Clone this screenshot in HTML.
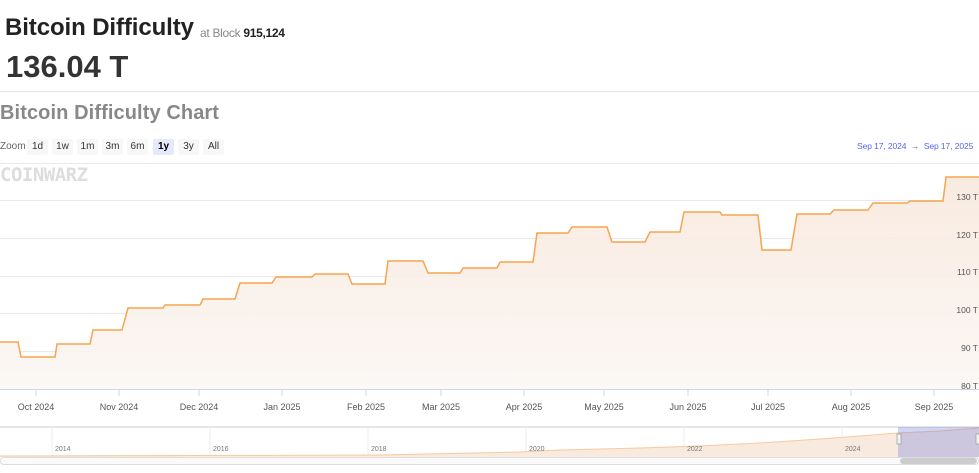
<!DOCTYPE html>
<html><head><style>
body{margin:0;width:979px;height:473px;background:#fff;font-family:"Liberation Sans",sans-serif;overflow:hidden;position:relative}
.a{position:absolute;white-space:nowrap}
.btn{position:absolute;top:139px;height:16px;line-height:16px;font-size:10px;color:#333;background:#f7f7f7;text-align:center;border-radius:2px}
</style></head><body>
<div class="a" style="left:5px;top:14px;font-size:24px;font-weight:bold;color:#222;letter-spacing:-0.1px">Bitcoin Difficulty</div>
<div class="a" style="left:200px;top:26px;font-size:12px;color:#888;letter-spacing:-0.3px">at Block <b style="color:#222">915,124</b></div>
<div class="a" style="left:6px;top:49px;font-size:31px;font-weight:bold;color:#333">136.04 T</div>
<div class="a" style="left:0;top:91px;width:979px;height:1px;background:#e3e3e3"></div>
<div class="a" style="left:0;top:102px;font-size:20px;font-weight:bold;color:#888;letter-spacing:0.1px">Bitcoin Difficulty Chart</div>
<div class="a" style="left:0;top:141px;font-size:10px;color:#666">Zoom</div>
<div class="btn" style="left:27px;width:21px">1d</div>
<div class="btn" style="left:52px;width:21px">1w</div>
<div class="btn" style="left:77px;width:21px">1m</div>
<div class="btn" style="left:102px;width:21px">3m</div>
<div class="btn" style="left:127px;width:21px">6m</div>
<div class="btn" style="left:153px;width:21px;background:#e6e9fb;font-weight:bold;color:#000">1y</div>
<div class="btn" style="left:178px;width:21px">3y</div>
<div class="btn" style="left:203px;width:21px">All</div>
<div class="a" style="left:857px;top:141px;font-size:8.5px;color:#5566ee;letter-spacing:-0.1px">Sep 17, 2024 <span style="color:#555">&nbsp;→&nbsp;</span> Sep 17, 2025</div>
<div class="a" style="left:0;top:164px;font-size:19px;font-weight:bold;color:#ddd;font-family:'DejaVu Sans Mono',monospace;letter-spacing:-0.5px">COINWARZ</div>
<svg class="a" style="left:0;top:0" width="979" height="473" font-family="Liberation Sans" font-size="9" fill="#555">
<defs><linearGradient id="g" x1="0" y1="0" x2="0" y2="1"><stop offset="0" stop-color="#f8e8dc"/><stop offset="1" stop-color="#fbf7f4"/></linearGradient></defs>
<g stroke="#e8e8e8" stroke-width="1">
<line x1="0" y1="163.5" x2="979" y2="163.5"/><line x1="0" y1="200.5" x2="979" y2="200.5"/><line x1="0" y1="238.5" x2="979" y2="238.5"/><line x1="0" y1="276.5" x2="979" y2="276.5"/><line x1="0" y1="313.5" x2="979" y2="313.5"/><line x1="0" y1="351.5" x2="979" y2="351.5"/>
</g>
<path d="M0 342 L18 342 L21 357 L55 357 L57 344 L90 344 L93 330 L122 330 L128 308 L163 308 L165 305 L200 305 L203 299 L235 299 L240 283 L272 283 L276 277 L312 277 L315 274 L348 274 L352 284 L385 284 L388 261 L423 261 L428 273 L460 273 L463 268 L497 268 L500 262 L533 262 L537 233 L568 233 L572 227 L607 227 L612 242 L645 242 L650 232 L680 232 L684 212 L720 212 L722 215 L758 215 L762 250 L791 250 L797 214 L830 214 L834 210 L868 210 L873 203 L907 203 L910 201 L943 201 L946 177 L979 177 L979 389 L0 389Z" fill="url(#g)" opacity="0.9"/>
<path d="M0 342 L18 342 L21 357 L55 357 L57 344 L90 344 L93 330 L122 330 L128 308 L163 308 L165 305 L200 305 L203 299 L235 299 L240 283 L272 283 L276 277 L312 277 L315 274 L348 274 L352 284 L385 284 L388 261 L423 261 L428 273 L460 273 L463 268 L497 268 L500 262 L533 262 L537 233 L568 233 L572 227 L607 227 L612 242 L645 242 L650 232 L680 232 L684 212 L720 212 L722 215 L758 215 L762 250 L791 250 L797 214 L830 214 L834 210 L868 210 L873 203 L907 203 L910 201 L943 201 L946 177 L979 177" fill="none" stroke="#f7a44e" stroke-width="1.5"/>
<line x1="0" y1="389.5" x2="979" y2="389.5" stroke="#ccd6eb"/>
<g text-anchor="end" font-size="8.5"><text x="978" y="200">130 T</text><text x="978" y="238">120 T</text><text x="978" y="275">110 T</text><text x="978" y="313">100 T</text><text x="978" y="351">90 T</text><text x="978" y="389">80 T</text></g>
<g stroke="#ccd6eb"><line x1="36" y1="390" x2="36" y2="396"/><line x1="119" y1="390" x2="119" y2="396"/><line x1="199" y1="390" x2="199" y2="396"/><line x1="282" y1="390" x2="282" y2="396"/><line x1="366" y1="390" x2="366" y2="396"/><line x1="441" y1="390" x2="441" y2="396"/><line x1="524" y1="390" x2="524" y2="396"/><line x1="604" y1="390" x2="604" y2="396"/><line x1="688" y1="390" x2="688" y2="396"/><line x1="768" y1="390" x2="768" y2="396"/><line x1="851" y1="390" x2="851" y2="396"/><line x1="934" y1="390" x2="934" y2="396"/></g>
<g text-anchor="middle" font-size="9"><text x="36" y="410">Oct 2024</text><text x="119" y="410">Nov 2024</text><text x="199" y="410">Dec 2024</text><text x="282" y="410">Jan 2025</text><text x="366" y="410">Feb 2025</text><text x="441" y="410">Mar 2025</text><text x="524" y="410">Apr 2025</text><text x="604" y="410">May 2025</text><text x="688" y="410">Jun 2025</text><text x="768" y="410">Jul 2025</text><text x="851" y="410">Aug 2025</text><text x="934" y="410">Sep 2025</text></g>
<line x1="0" y1="427" x2="979" y2="427" stroke="#ccc"/>
<g stroke="#eee"><line x1="52" y1="427" x2="52" y2="457"/><line x1="210" y1="427" x2="210" y2="457"/><line x1="368" y1="427" x2="368" y2="457"/><line x1="526" y1="427" x2="526" y2="457"/><line x1="684" y1="427" x2="684" y2="457"/><line x1="842" y1="427" x2="842" y2="457"/></g>
<path d="M0 456 L380 455 L520 452 L560 450 L640 448 L700 446 L760 443 L820 439 L860 436 L898 433 L940 431 L979 428 L979 457 L0 457Z" fill="#f8eadf"/>
<path d="M0 456 L380 455 L520 452 L560 450 L640 448 L700 446 L760 443 L820 439 L860 436 L898 433 L940 431 L979 428" fill="none" stroke="#f9c99a"/>
<g font-size="7" fill="#777"><text x="55" y="451">2014</text><text x="213" y="451">2016</text><text x="371" y="451">2018</text><text x="529" y="451">2020</text><text x="687" y="451">2022</text><text x="845" y="451">2024</text></g>
<rect x="898" y="427" width="81" height="30" fill="#6675dd" opacity="0.3"/>
<rect x="897" y="434" width="4" height="10" fill="#f2f2f2" stroke="#999" stroke-width="0.7"/>
<rect x="976" y="434" width="4" height="10" fill="#f2f2f2" stroke="#999" stroke-width="0.7"/>
<rect x="0.5" y="457.5" width="978" height="7" rx="3" fill="#fafafa" stroke="#ddd"/>
<rect x="900" y="458" width="77" height="6" rx="3" fill="#ccc"/>
</svg>
</body></html>
